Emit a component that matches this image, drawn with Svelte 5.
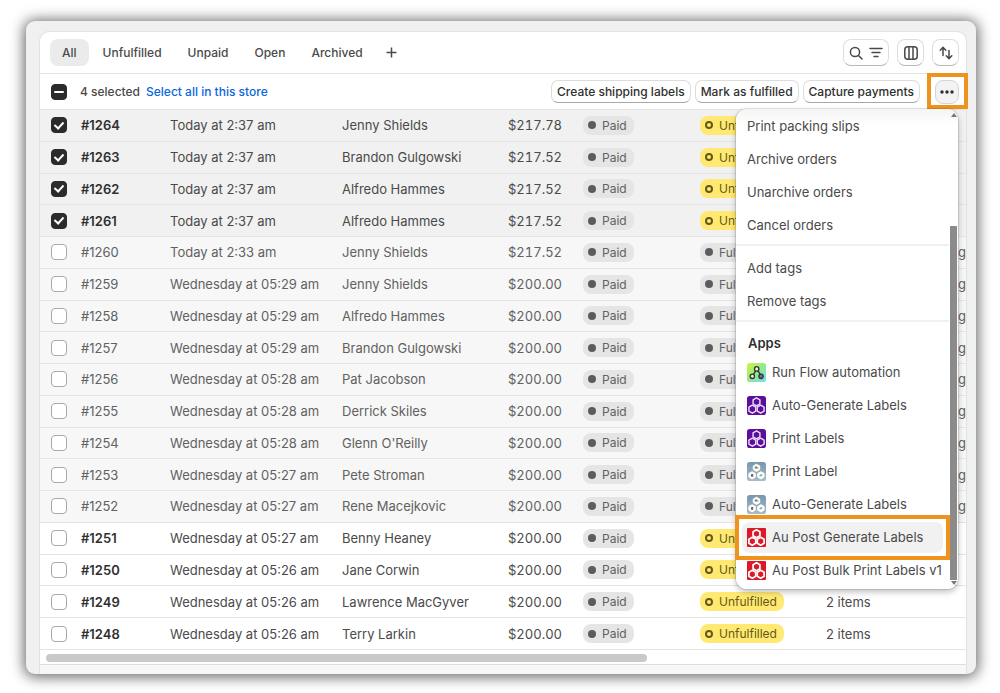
<script>
  const tabs = ['All', 'Unfulfilled', 'Unpaid', 'Open', 'Archived'];
  let activeTab = $state('All');
  let menuOpen = $state(true);

  let orders = $state([
    { id: 1264, date: 'Today at 2:37 am', customer: 'Jenny Shields', total: '$217.78', fulfilled: false, selected: true },
    { id: 1263, date: 'Today at 2:37 am', customer: 'Brandon Gulgowski', total: '$217.52', fulfilled: false, selected: true },
    { id: 1262, date: 'Today at 2:37 am', customer: 'Alfredo Hammes', total: '$217.52', fulfilled: false, selected: true },
    { id: 1261, date: 'Today at 2:37 am', customer: 'Alfredo Hammes', total: '$217.52', fulfilled: false, selected: true },
    { id: 1260, date: 'Today at 2:33 am', customer: 'Jenny Shields', total: '$217.52', fulfilled: true, selected: false },
    { id: 1259, date: 'Wednesday at 05:29 am', customer: 'Jenny Shields', total: '$200.00', fulfilled: true, selected: false },
    { id: 1258, date: 'Wednesday at 05:29 am', customer: 'Alfredo Hammes', total: '$200.00', fulfilled: true, selected: false },
    { id: 1257, date: 'Wednesday at 05:29 am', customer: 'Brandon Gulgowski', total: '$200.00', fulfilled: true, selected: false },
    { id: 1256, date: 'Wednesday at 05:28 am', customer: 'Pat Jacobson', total: '$200.00', fulfilled: true, selected: false },
    { id: 1255, date: 'Wednesday at 05:28 am', customer: 'Derrick Skiles', total: '$200.00', fulfilled: true, selected: false },
    { id: 1254, date: 'Wednesday at 05:28 am', customer: "Glenn O'Reilly", total: '$200.00', fulfilled: true, selected: false },
    { id: 1253, date: 'Wednesday at 05:27 am', customer: 'Pete Stroman', total: '$200.00', fulfilled: true, selected: false },
    { id: 1252, date: 'Wednesday at 05:27 am', customer: 'Rene Macejkovic', total: '$200.00', fulfilled: true, selected: false },
    { id: 1251, date: 'Wednesday at 05:27 am', customer: 'Benny Heaney', total: '$200.00', fulfilled: false, selected: false },
    { id: 1250, date: 'Wednesday at 05:26 am', customer: 'Jane Corwin', total: '$200.00', fulfilled: false, selected: false },
    { id: 1249, date: 'Wednesday at 05:26 am', customer: 'Lawrence MacGyver', total: '$200.00', fulfilled: false, selected: false },
    { id: 1248, date: 'Wednesday at 05:26 am', customer: 'Terry Larkin', total: '$200.00', fulfilled: false, selected: false }
  ]);

  const orderActions = ['Print packing slips', 'Archive orders', 'Unarchive orders', 'Cancel orders'];
  const tagActions = ['Add tags', 'Remove tags'];
  const apps = [
    { name: 'Run Flow automation', icon: 'flow' },
    { name: 'Auto-Generate Labels', icon: 'purple' },
    { name: 'Print Labels', icon: 'purple' },
    { name: 'Print Label', icon: 'photo' },
    { name: 'Auto-Generate Labels', icon: 'photo' },
    { name: 'Au Post Generate Labels', icon: 'red', current: true },
    { name: 'Au Post Bulk Print Labels v1', icon: 'red' }
  ];

  let selectedCount = $derived(orders.filter((o) => o.selected).length);

  function setAll(value) {
    orders.forEach((o) => (o.selected = value));
  }
</script>

{#snippet appIcon(kind)}
  <svg class="app-icon" viewBox="0 0 20 20" aria-hidden="true">
    {#if kind === 'flow'}
      <defs>
        <linearGradient id="flow-bg" x1="0" y1="0" x2="1" y2="1">
          <stop offset="0" stop-color="#d3f23a" />
          <stop offset="0.5" stop-color="#94e98c" />
          <stop offset="1" stop-color="#6fdff0" />
        </linearGradient>
      </defs>
      <rect width="20" height="20" rx="3" fill="url(#flow-bg)" />
      <g fill="none" stroke="#333" stroke-width="1.4">
        <path d="M9 8.500 6.800 12M11.500 8.200l2.600 3.800" />
        <circle cx="10.2" cy="6.2" r="2.3" fill="#e4fbcf" />
        <circle cx="5.6" cy="14" r="2.3" fill="#e4fbcf" />
        <circle cx="14.8" cy="14" r="2.3" fill="#777" />
      </g>
    {:else if kind === 'photo'}
      <defs>
        <linearGradient id="photo-bg" x1="0" y1="0" x2="0" y2="1">
          <stop offset="0" stop-color="#7797ac" />
          <stop offset="1" stop-color="#a5bccb" />
        </linearGradient>
      </defs>
      <rect width="20" height="20" rx="3" fill="url(#photo-bg)" />
      <g fill="#fff" stroke="#fff" stroke-width="1" stroke-linejoin="round">
        <path d="m10 2.300 3.400 1.900v3.800l-3.400 1.900-3.400-1.900v-3.800z" />
        <path d="m5.400 10.200 3.400 1.900v3.800l-3.400 1.900-3.400-1.900v-3.800z" />
        <path d="m14.600 10.200 3.400 1.900v3.800l-3.400 1.900-3.400-1.900v-3.800z" />
      </g>
      <path d="M8.200 4.800h2.600v2H8.200z" fill="#5c7484" />
      <path d="M10 5.500h2V7h-2z" fill="#e39b3b" />
      <path d="M4.300 12.600h2.200v3H4.300z" fill="#8a583c" />
      <path d="M13 15c0-1.800 1.300-2.200 3.200-2.200 0 1.700-1.300 2.700-3.200 2.200z" fill="#68b678" />
    {:else}
      <rect width="20" height="20" rx={kind === 'red' ? 1 : 3} fill={kind === 'red' ? '#dc1928' : '#5b0d9c'} />
      <g
        fill="none"
        stroke={kind === 'red' ? '#fff' : '#eadcf6'}
        stroke-width={kind === 'red' ? 1.8 : 1.5}
        stroke-linejoin="round">
        <path d="m10 1.900 3.600 2.100v4.200l-3.600 2.100-3.600-2.100V4z" />
        <path d="m5.600 9.700 3.600 2.100V16l-3.600 2.100L2 16v-4.200z" />
        <path d="m14.400 9.700 3.600 2.100V16l-3.600 2.100-3.600-2.100v-4.200z" />
      </g>
    {/if}
  </svg>
{/snippet}

<div class="frame">
  <main class="card">
    <nav class="tabs">
      {#each tabs as tab}
        <button class="tab" class:tab--active={tab === activeTab} onclick={() => (activeTab = tab)}>{tab}</button>
      {/each}
      <button class="tab tab--add" aria-label="Create new view">
        <svg width="11" height="11" viewBox="0 0 11 11"><path d="M5.5 .5v10M.5 5.5h10" fill="none" stroke="#4a4a4a" stroke-width="1.5" /></svg>
      </button>
      <div class="tools">
        <button class="tool tool--wide" aria-label="Search and filter">
          <svg width="14" height="14" viewBox="0 0 14 14" fill="none" stroke="#4a4a4a" stroke-width="1.5" stroke-linecap="round">
            <circle cx="6" cy="6" r="4.6" /><path d="m9.5 9.5 3.5 3.5" />
          </svg>
          <svg width="14" height="14" viewBox="0 0 14 14" fill="none" stroke="#4a4a4a" stroke-width="1.5" stroke-linecap="round">
            <path d="M1 2.5h12M3 6.500h8M5 10.500h4" />
          </svg>
        </button>
        <button class="tool" aria-label="Edit columns">
          <svg width="14" height="14" viewBox="0 0 14 14" fill="none" stroke="#4a4a4a" stroke-width="1.5">
            <rect x=".8" y=".8" width="12.4" height="12.4" rx="3" /><path d="M5 1v12M9 1v12" />
          </svg>
        </button>
        <button class="tool" aria-label="Sort">
          <svg width="14" height="14" viewBox="0 0 14 14" fill="none" stroke="#4a4a4a" stroke-width="1.5" stroke-linecap="round" stroke-linejoin="round">
            <path d="M4 9.5v-8M1.2 4.2 4 1.400l2.800 2.800M10 4.500v8M7.200 9.800l2.800 2.800 2.800-2.800" />
          </svg>
        </button>
      </div>
    </nav>

    <div class="bulk">
      <input
        class="check"
        type="checkbox"
        aria-label="Select all orders"
        indeterminate={selectedCount > 0 && selectedCount < orders.length}
        checked={selectedCount === orders.length}
        onchange={(e) => setAll(e.currentTarget.checked)} />
      <span class="bulk__count">{selectedCount} selected</span>
      <a class="bulk__link" href="#all" onclick={() => setAll(true)}>Select all in this store</a>
      <div class="bulk__actions">
        <button class="action">Create shipping labels</button>
        <button class="action">Mark as fulfilled</button>
        <button class="action">Capture payments</button>
      </div>
      <div class="more">
        <button class="more__button" aria-label="More actions" onclick={() => (menuOpen = !menuOpen)}>
          <svg width="14" height="4" viewBox="0 0 14 4" fill="#303030">
            <circle cx="2" cy="2" r="1.7" /><circle cx="7" cy="2" r="1.7" /><circle cx="12" cy="2" r="1.7" />
          </svg>
        </button>

        {#if menuOpen}
          <div class="menu">
            <div class="menu__body">
              <div class="menu__group menu__group--first">
                {#each orderActions as action}
                  <button class="item">{action}</button>
                {/each}
              </div>
              <div class="menu__group">
                {#each tagActions as action}
                  <button class="item">{action}</button>
                {/each}
              </div>
              <div class="menu__group menu__group--apps">
                <h2 class="menu__title">Apps</h2>
                {#each apps as app}
                  <button class="item" class:item--current={app.current}>
                    {@render appIcon(app.icon)}
                    {app.name}
                  </button>
                {/each}
              </div>
            </div>
            <div class="scroll">
              <svg width="6" height="4" viewBox="0 0 6 4"><path d="M0 4h6L3 0z" fill="#777" /></svg>
              <div class="scroll__thumb"></div>
              <svg width="6" height="4" viewBox="0 0 6 4"><path d="M0 0h6L3 4z" fill="#777" /></svg>
            </div>
          </div>
        {/if}
      </div>
    </div>

    <div class="orders">
      <table>
        <colgroup>
          <col class="col-check" />
          <col class="col-id" />
          <col class="col-date" />
          <col class="col-customer" />
          <col class="col-total" />
          <col class="col-payment" />
          <col class="col-status" />
          <col class="col-items" />
          <col />
        </colgroup>
        <tbody>
          {#each orders as order (order.id)}
            <tr class:selected={order.selected} class:fulfilled={order.fulfilled}>
              <td class="cell-check">
                <input class="check" type="checkbox" aria-label="Select order #{order.id}" bind:checked={order.selected} />
              </td>
              <td class="cell-id">#{order.id}</td>
              <td>{order.date}</td>
              <td>{order.customer}</td>
              <td class="cell-total">{order.total}</td>
              <td class="cell-badge"><span class="badge"><i class="dot"></i>Paid</span></td>
              <td>
                {#if order.fulfilled}
                  <span class="badge"><i class="dot"></i>Fulfilled</span>
                {:else}
                  <span class="badge badge--yellow"><i class="dot dot--open"></i>Unfulfilled</span>
                {/if}
              </td>
              <td>2 items</td>
              <td class="cell-delivery">{order.fulfilled ? 'Tracking' : ''}</td>
            </tr>
          {/each}
        </tbody>
      </table>
    </div>
    <div class="hscroll"><div class="hscroll__thumb"></div></div>
    <footer class="footer"></footer>
  </main>
</div>

<style>
  :global(body) {
    background: #fff;
    font-family: Inter, 'Liberation Sans', sans-serif;
    font-size: 13px;
    color: #4a4a4a;
  }
  :global(*) {
    box-sizing: border-box;
  }
  button {
    font: inherit;
    color: inherit;
    padding: 0;
    border: 0;
    background: none;
    cursor: pointer;
    white-space: nowrap;
  }

  .frame {
    margin: 21px 24px 20px 26px;
    padding: 10px 9px 0 13px;
    background: #f0f0f0;
    border-radius: 9px;
    box-shadow: 0 1px 14px 2px rgba(0, 0, 0, 0.6);
  }
  .card {
    background: #fff;
    border: 1px solid #e2e2e2;
    border-bottom: 0;
    border-radius: 10px 10px 0 0;
  }

  .tabs {
    display: flex;
    align-items: center;
    height: 42px;
    padding: 0 7px 0 10px;
    border-bottom: 1px solid #e2e2e2;
    font-size: 12px;
    font-weight: 500;
  }
  .tab {
    height: 27px;
    padding: 0 12px;
    margin-right: 2px;
    border-radius: 8px;
  }
  .tab--active {
    background: #ebebeb;
  }
  .tab--add {
    display: flex;
    align-items: center;
    padding: 0 9px;
  }
  .tools {
    display: flex;
    gap: 8px;
    margin-left: auto;
  }
  .tool {
    display: flex;
    align-items: center;
    justify-content: center;
    gap: 6px;
    width: 27px;
    height: 27px;
    border: 1px solid #dedede;
    border-bottom-color: #b8b8b8;
    border-radius: 8px;
  }
  .tool--wide {
    width: 46px;
  }

  .bulk {
    display: flex;
    align-items: center;
    height: 36px;
    padding: 0 7px 0 11px;
    border-bottom: 1px solid #e2e2e2;
    font-size: 12px;
    font-weight: 500;
  }
  .bulk__count {
    margin: 0 6px 0 13px;
  }
  .bulk__link {
    color: #0b66dd;
    text-decoration: none;
  }
  .bulk__actions {
    display: flex;
    gap: 4px;
    margin-left: auto;
  }
  .action {
    height: 23px;
    padding: 0 5px;
    border: 1px solid #dcdcdc;
    border-bottom-color: #a8a8a8;
    border-radius: 7px;
    color: #303030;
  }
  .more {
    position: relative;
    margin-left: 15px;
  }
  .more__button {
    position: relative;
    display: flex;
    align-items: center;
    justify-content: center;
    width: 24px;
    height: 24px;
    border: 1px solid #d4d4d4;
    border-radius: 8px;
    background: #f3f3f3;
  }
  /* callout frames */
  .more__button::after,
  .item--current::after {
    content: '';
    position: absolute;
    inset: -8px -10px -6px -9px;
    border: 4px solid #ef931f;
    pointer-events: none;
  }

  .check {
    appearance: none;
    display: grid;
    place-items: center;
    flex: none;
    width: 16px;
    height: 16px;
    margin: 0;
    border: 1px solid #a8a8a8;
    border-radius: 4px;
    background: #fff;
  }
  .check:checked,
  .check:indeterminate {
    border-color: #2b2b2b;
    background: #2b2b2b;
  }
  .check:checked::after {
    content: '';
    width: 4px;
    height: 7px;
    margin-bottom: 2px;
    border: solid #fff;
    border-width: 0 2px 2px 0;
    transform: rotate(42deg);
  }
  .check:indeterminate::after {
    content: '';
    width: 10px;
    height: 2px;
    border-radius: 1px;
    background: #fff;
  }

  .orders {
    overflow: hidden;
  }
  table {
    width: 100%;
    height: 540px;
    table-layout: fixed;
    border-collapse: separate;
    border-spacing: 0;
  }
  td {
    padding: 0;
    border-bottom: 1px solid #e4e4e4;
    white-space: nowrap;
  }
  .col-check {
    width: 41px;
  }
  .col-id {
    width: 89px;
  }
  .col-date {
    width: 172px;
  }
  .col-customer {
    width: 140px;
  }
  .col-total {
    width: 80px;
  }
  .col-payment {
    width: 138px;
  }
  .col-status {
    width: 126px;
  }
  .col-items {
    width: 80px;
  }
  .selected {
    background: #f1f1f1;
  }
  .fulfilled {
    background: #f7f7f7;
    color: #616161;
  }
  .cell-check {
    padding-left: 11px;
  }
  .cell-id {
    font-weight: 600;
    color: #303030;
  }
  .fulfilled .cell-id {
    font-weight: 400;
    color: #616161;
  }
  .cell-total {
    text-align: right;
    font-variant-numeric: tabular-nums;
  }
  .cell-badge {
    padding-left: 21px;
  }
  .cell-delivery {
    text-align: right;
  }
  .badge {
    display: inline-flex;
    align-items: center;
    height: 19px;
    padding: 0 7px 0 5px;
    border-radius: 8px;
    background: #e5e5e5;
    color: #616161;
    font-size: 12px;
    font-weight: 400;
  }
  .badge--yellow {
    background: #ffe973;
    color: #655a14;
  }
  .dot {
    width: 8px;
    height: 8px;
    margin-right: 6px;
    border-radius: 4px;
    background: #5c5c5c;
  }
  .dot--open {
    border: 2px solid #655a14;
    background: none;
  }

  .menu {
    position: absolute;
    z-index: 1;
    top: 29px;
    right: 1px;
    display: flex;
    width: 222px;
    border-radius: 11px;
    background: linear-gradient(#f4f4f4, #fff 16px);
    box-shadow: 0 0 0 1px rgba(0, 0, 0, 0.1), 0 3px 6px rgba(0, 0, 0, 0.25);
    font-size: 13px;
    font-weight: 400;
  }
  .menu__body {
    flex: 1;
    min-width: 0;
  }
  .menu__group {
    display: flex;
    flex-direction: column;
    gap: 2px;
    padding: 7px 6px 3px;
    border-bottom: 2px solid #f0f0f0;
  }
  .menu__group--first {
    padding-top: 2px;
  }
  .menu__group--apps {
    border-bottom: 0;
  }
  .menu__title {
    margin: 0;
    padding: 6px 6px 4px;
    font-size: 13px;
    line-height: 16px;
    font-weight: 600;
    color: #303030;
  }
  .item {
    display: flex;
    align-items: center;
    gap: 6px;
    height: 31px;
    padding: 0 5px;
    border-radius: 8px;
  }
  .item--current {
    position: relative;
    background: #f1f1f1;
  }
  .item--current::after {
    inset: -7px;
  }
  .app-icon {
    flex: none;
    width: 19px;
    height: 19px;
  }
  .scroll {
    display: flex;
    flex-direction: column;
    align-items: center;
    justify-content: space-between;
    width: 9px;
    padding: 4px 0;
  }
  .scroll__thumb {
    width: 7px;
    height: 75%;
    margin: auto 0 1px;
    background: #8b8b8b;
  }

  .hscroll {
    height: 15px;
    padding: 4px 10px 4px 6px;
    border-bottom: 1px solid #dedede;
  }
  .hscroll__thumb {
    width: 66%;
    height: 8px;
    border-radius: 4px;
    background: #c9c9c9;
  }
  .footer {
    height: 9px;
    background: #f7f7f7;
  }
</style>
